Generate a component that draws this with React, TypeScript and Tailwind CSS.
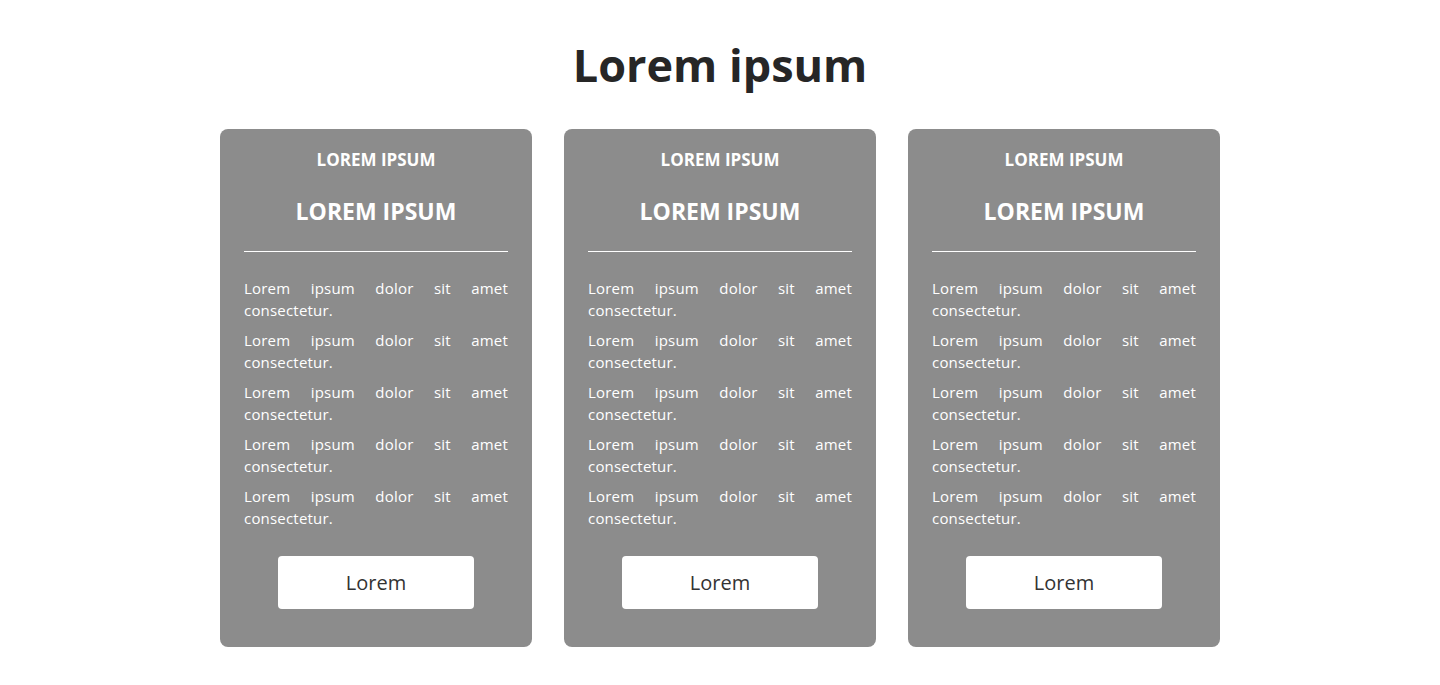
const plans = [1, 2, 3];
const lines = [1, 2, 3, 4, 5];

function PlanCard() {
  return (
    <div className="w-[312px] rounded-lg bg-[#8c8c8c] px-6 pt-[19px] pb-[38px] text-white">
      <h3 className="text-center text-[17px] leading-[24px] font-bold uppercase">Lorem ipsum</h3>
      <h2 className="mt-[23px] text-center text-[23px] leading-[32px] font-bold uppercase">Lorem ipsum</h2>
      <hr className="mt-[24px] border-0 border-t border-white" />
      <div className="mt-[25px] flex flex-col gap-2">
        {lines.map((i) => (
          <p key={i} className="text-justify text-[15px] leading-[22px] tracking-[0.2px]">
            Lorem ipsum dolor sit amet consectetur.
          </p>
        ))}
      </div>
      <div className="mt-[27px] flex justify-center">
        <button className="h-[53px] w-[196px] rounded bg-white text-[20px] text-[#333333]">Lorem</button>
      </div>
    </div>
  );
}

export default function App() {
  return (
    <div className="min-h-[685px] bg-white pt-[29px] font-['Open_Sans',sans-serif]">
      <h1 className="text-center text-[45px] leading-[72px] font-bold text-[#262626]">Lorem ipsum</h1>
      <div className="mt-[28px] flex justify-center gap-8">
        {plans.map((p) => (
          <PlanCard key={p} />
        ))}
      </div>
    </div>
  );
}
